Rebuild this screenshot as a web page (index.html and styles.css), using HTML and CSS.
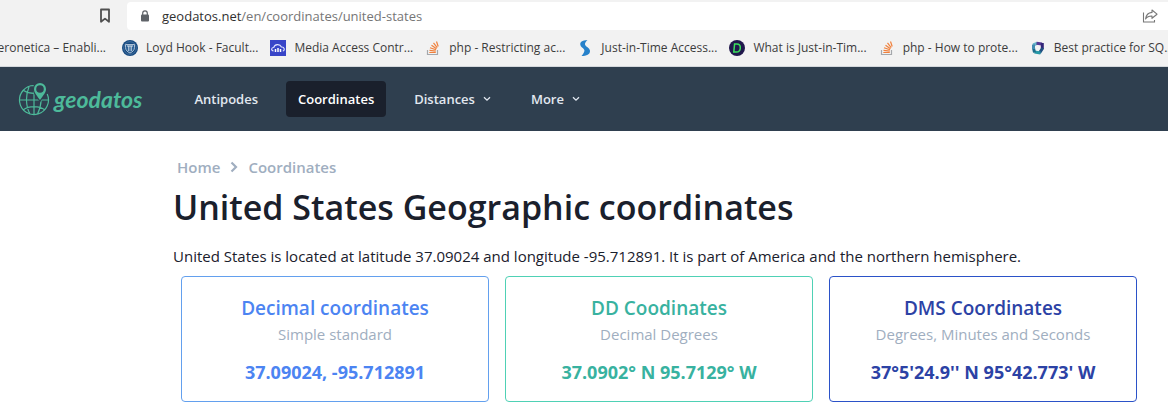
FILE: index.html
```html
<!DOCTYPE html>
<html lang="en">
<head>
<meta charset="utf-8">
<title>United States Geographic coordinates</title>
<link rel="stylesheet" href="styles.css">
</head>
<body>
<div class="browser">
  <div class="toolbar">
    <button class="tool-button" type="button" aria-label="Bookmark this page">
      <svg width="12" height="16" viewBox="0 0 12 16"><path d="M2 1.500h8v12.300L6 10.600l-4 3.200z" fill="none" stroke="#505050" stroke-width="1.800" stroke-linejoin="round"/></svg>
    </button>
    <div class="address">
      <svg width="10" height="12" viewBox="0 0 10 12"><rect x="1" y="4.500" width="8" height="7" rx="1" fill="#5f6368"/><path d="M2.700 5V3.200a2.300 2.300 0 0 1 4.600 0V5" fill="none" stroke="#5f6368" stroke-width="1.200"/></svg>
      <span class="url"><span class="host">geodatos.net</span>/en/coordinates/united-states</span>
      <button class="tool-button" type="button" aria-label="Share">
        <svg width="16" height="16" viewBox="0 0 16 16" fill="none" stroke="#777" stroke-width="1.100"><path d="M1.500 4.500v9.500h11v-2"/><path d="M10 2l5 4.200-5 4.100V8C7 7.900 5 8.800 3.600 11 4 7.500 6 4.800 10 4.400z" stroke-linejoin="round"/></svg>
      </button>
    </div>
  </div>
  <nav class="bookmarks" aria-label="Bookmarks">
    <a class="bookmark bookmark-first" href="#">Aeronetica – Enabli...</a>
    <a class="bookmark" href="#">
      <svg width="16" height="16" viewBox="0 0 16 16"><circle cx="8" cy="8" r="8" fill="#174a80"/><circle cx="8" cy="8" r="6.300" fill="none" stroke="#5f88b2" stroke-width=".6"/><path d="M3.500 4.500h9v3c0 2.700-2 4.500-4.500 5.500-2.500-1-4.500-2.800-4.500-5.500z" fill="#2d6297" stroke="#bccbdc" stroke-width=".9"/><path d="M5 6h6M6.800 6v5M9.200 6v5" stroke="#d5e0eb"/></svg>
      Loyd Hook - Facult...</a>
    <a class="bookmark" href="#">
      <svg width="16" height="16" viewBox="0 0 16 16"><rect width="16" height="16" fill="#3845c8"/><path d="M3.500 11C.5 10.500 1.500 7.300 3.800 7.500 4.500 4 10 3.500 11.400 7c3.200-.2 3.800 3.500 1.400 4" fill="none" stroke="#dfe3ff" stroke-width="1.100"/><path d="M5.500 9v3M8 8v4M10.500 9v3" stroke="#fff" stroke-width="1.500"/></svg>
      Media Access Contr...</a>
    <a class="bookmark" href="#">
      <svg width="16" height="16" viewBox="0 0 16 16" fill="none"><path d="M2.500 10v4.500h10V10" stroke="#a5a8ac" stroke-width="1.200"/><path d="M4.300 12.500h6.500M4.500 10.300l6.300.9M5 7.700l6 2.100M6.500 5.200l5 3.500M8.500 2.900l3.700 4.700M11.500 1.500l1.700 5" stroke="#f0803c" stroke-width="1.200"/></svg>
      php - Restricting ac...</a>
    <a class="bookmark" href="#">
      <svg width="16" height="16" viewBox="0 0 16 16"><path d="M10.500 0C5 .2 2.700 2 3.400 5c.5 2.500 4.600 3.700 4 6C7 12.500 6 14.500 4.500 16c5 0 8.700-1.500 8.500-5.200C12.700 7.500 8.500 7 8 4.500 7.800 3 9 1.200 10.500 0z" fill="#2681ca"/></svg>
      Just-in-Time Access...</a>
    <a class="bookmark" href="#">
      <svg width="16" height="16" viewBox="0 0 16 16"><circle cx="8" cy="8" r="8" fill="#20184c"/><path d="M5.600 4h2.200c2.400 0 3.700 1.500 3.500 4.200-.2 2.600-1.600 3.800-3.800 3.800H4.800z" fill="none" stroke="#3be05c" stroke-width="1.500"/></svg>
      What is Just-in-Tim...</a>
    <a class="bookmark" href="#">
      <svg width="16" height="16" viewBox="0 0 16 16" fill="none"><path d="M2.500 10v4.500h10V10" stroke="#a5a8ac" stroke-width="1.200"/><path d="M4.300 12.500h6.500M4.500 10.300l6.300.9M5 7.700l6 2.100M6.500 5.200l5 3.500M8.500 2.900l3.700 4.700M11.500 1.500l1.700 5" stroke="#f0803c" stroke-width="1.200"/></svg>
      php - How to prote...</a>
    <a class="bookmark" href="#">
      <svg width="16" height="16" viewBox="0 0 16 16" fill="none" stroke-width="3"><path d="M3.200 5L7.500 3.200" stroke="#69b6ca"/><path d="M6.500 3.200L12 4" stroke="#553a94"/><path d="M12.300 3v6" stroke="#332578"/><path d="M12.800 8L9.500 12.800" stroke="#204f80"/><path d="M10.500 13L4.500 12" stroke="#2699a7"/><path d="M4.500 12.500L3.500 8" stroke="#1c6d8b"/><path d="M3.500 9V4.500" stroke="#428db1"/></svg>
      Best practice for SQ...</a>
  </nav>
</div>
<header class="site-header">
  <a class="logo" href="#">
    <svg width="32" height="34" viewBox="0 0 32 34" fill="none" stroke="#4dba9a" stroke-width="1.200"><path d="M16 3.500A14.500 14.500 0 1 0 29.200 12M1.500 18H30.500M16 3.500V32.500M11 5C7.500 13 7.500 24 12 32M23 16c.5 6-1 11-3.500 16M5.500 8.500c3 2 6 2.800 10.500 2.800M5 28c6-4.500 16-4.500 22 0"/><path d="M22 18C19 13.500 16 11 16 7a6 6 0 0 1 12 0c0 4-3 6.500-6 11z" fill="#4dba9a" stroke="#2f3f4f" stroke-width="2.500" paint-order="stroke"/><circle cx="22" cy="7" r="3.800" fill="#2f3f4f" stroke="none"/></svg>
    <span>geodatos</span>
  </a>
  <nav class="menu" aria-label="Main">
    <a class="menu-item" href="#">Antipodes</a>
    <a class="menu-item menu-item-active" href="#">Coordinates</a>
    <button class="menu-item" type="button">Distances <svg width="8" height="6" viewBox="0 0 8 6"><path d="M1 1.200l3 3 3-3" fill="none" stroke="currentColor" stroke-width="1.300"/></svg></button>
    <button class="menu-item" type="button">More <svg width="8" height="6" viewBox="0 0 8 6"><path d="M1 1.200l3 3 3-3" fill="none" stroke="currentColor" stroke-width="1.300"/></svg></button>
  </nav>
</header>
<main class="content">
  <nav class="breadcrumb" aria-label="Breadcrumb">
    <a href="#">Home</a>
    <svg width="8" height="12" viewBox="0 0 8 12"><path d="M1.500 1.500L6 6l-4.500 4.500" fill="none" stroke="currentColor" stroke-width="2.200"/></svg>
    <a href="#">Coordinates</a>
  </nav>
  <h1 class="title">United States Geographic coordinates</h1>
  <p class="intro">United States is located at latitude 37.09024 and longitude -95.712891. It is part of America and the northern hemisphere.</p>
  <div class="cards">
    <section class="card card-decimal">
      <h2 class="card-title">Decimal coordinates</h2>
      <p class="card-note">Simple standard</p>
      <p class="card-value">37.09024, -95.712891</p>
    </section>
    <section class="card card-dd">
      <h2 class="card-title">DD Coodinates</h2>
      <p class="card-note">Decimal Degrees</p>
      <p class="card-value">37.0902° N 95.7129° W</p>
    </section>
    <section class="card card-dms">
      <h2 class="card-title">DMS Coordinates</h2>
      <p class="card-note">Degrees, Minutes and Seconds</p>
      <p class="card-value">37°5'24.9'' N 95°42.773' W</p>
    </section>
  </div>
</main>
</body>
</html>
```
FILE: styles.css
```css
* { box-sizing: border-box; }
body {
  margin: 0;
  background: #fff;
  color: #1a202c;
  font-family: "Open Sans", "Noto Sans", sans-serif;
  font-size: 15px;
  line-height: 24px;
}
h1, h2, p { margin: 0; }
a { color: inherit; text-decoration: none; }
button { border: 0; padding: 0; background: none; color: inherit; font: inherit; }
svg { display: block; flex: none; }

.browser {
  background: #f2f2f2;
  border-bottom: 1px solid #d4d8dc;
  overflow: hidden;
}
.toolbar {
  display: flex;
  align-items: center;
  gap: 16px;
  padding: 2px 0 0 99px;
}
.address {
  display: flex;
  flex: 1;
  align-items: center;
  gap: 12px;
  height: 28px;
  padding: 0 10px 0 13px;
  background: #fff;
  border-radius: 4px 0 0 4px;
}
.url { flex: 1; color: #767676; font-size: 13px; }
.host { color: #303030; }
.bookmarks {
  display: flex;
  align-items: center;
  gap: 12px;
  height: 36px;
  overflow: hidden;
  color: #3c3c3c;
  font-size: 12px;
  line-height: 20px;
  white-space: nowrap;
}
.bookmark { display: flex; flex: none; align-items: center; gap: 8px; }
.bookmark-first { width: 110px; padding-right: 4px; justify-content: flex-end; }

.site-header {
  display: flex;
  align-items: center;
  gap: 40px;
  height: 64px;
  padding-left: 18px;
  background: #2f3f4f;
}
.logo {
  display: flex;
  align-items: center;
  gap: 4px;
  color: #4dba9a;
  font: italic 700 23px/32px Lato, sans-serif;
}
.menu { display: flex; gap: 16px; color: #e2e8f0; font-size: 13px; font-weight: 600; }
.menu-item {
  display: flex;
  align-items: center;
  gap: 8px;
  height: 36px;
  padding: 0 12px;
  border-radius: 4px;
}
.menu-item-active { background: #1a202c; color: #fff; }

.content { padding: 24px 23px 6px 173px; }
.breadcrumb {
  display: flex;
  align-items: center;
  gap: 10px;
  padding-left: 4px;
  color: #a0aec0;
  font-weight: 600;
}
.title { margin-top: 6px; font-size: 34px; font-weight: 600; line-height: 45px; }
.intro { margin-top: 14px; }
.cards {
  display: grid;
  grid-template-columns: repeat(3, 1fr);
  gap: 16px;
  padding: 8px 8px 0;
}
.card {
  padding: 16px 8px 15px;
  border: 1px solid;
  border-radius: 4px;
  text-align: center;
}
.card-title { font-size: 19px; font-weight: 600; line-height: 30px; }
.card-note { color: #a0aec0; line-height: 22px; }
.card-value { margin-top: 13px; font-size: 18px; font-weight: 700; line-height: 28px; }
.card-decimal { border-color: #63a0ee; color: #4c84f2; }
.card-dd { border-color: #4fd1b5; color: #38b2a0; }
.card-dms { border-color: #2b52c8; color: #2c42a5; }
```
